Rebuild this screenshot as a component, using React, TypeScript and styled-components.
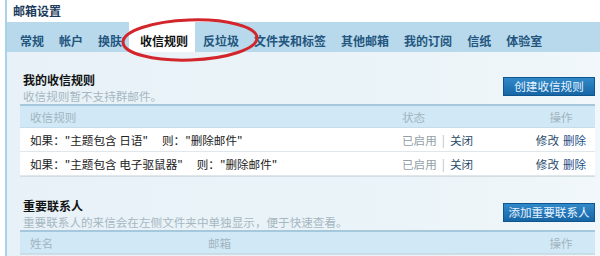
import React from "react";
import styled, { createGlobalStyle } from "styled-components";

const GlobalStyle = createGlobalStyle`
  html, body { margin: 0; padding: 0; background: #ffffff; }
  body {
    font-family: "Noto Sans CJK SC", "Liberation Sans", sans-serif;
    font-size: 12px;
    color: #222;
  }
`;

const Page = styled.div`
  position: relative;
  width: 600px;
  height: 256px;
  overflow: hidden;
  background: #fff;
  padding-left: 5px;
  box-sizing: border-box;
`;

const Frame = styled.div`
  height: 100%;
  border-left: 2px solid #a8d1ea;
  display: flex;
  flex-direction: column;
`;

const Title = styled.div`
  height: 22px;
  padding-left: 6px;
  font-size: 12px;
  font-weight: 700;
  line-height: 22px;
  color: #1d3c5c;
`;

const TabBar = styled.div`
  height: 30px;
  background: #b7d9eb;
  display: flex;
  align-items: stretch;
  padding-left: 5px;
`;

const Tab = styled.div<{ $active?: boolean }>`
  padding: ${(p) => (p.$active ? "4px 7px 0 11px" : "4px 7px 0 8px")};
  background: ${(p) => (p.$active ? "#ffffff" : "transparent")};
  color: ${(p) => (p.$active ? "#111" : "#24557e")};
  font-size: 12px;
  font-weight: 700;
  line-height: 30px;
  height: 26px;
  white-space: nowrap;
`;

const Content = styled.div`
  flex: 1;
  background: linear-gradient(90deg, #e7f1f7 0%, #ebf4f8 70%, #f1f7fa 100%);
  padding: 20px 5px 0 13px;
  display: flex;
  flex-direction: column;
`;

const Section = styled.div<{ $gap?: number }>`
  margin-bottom: ${(p) => p.$gap ?? 0}px;
`;

const SectionHead = styled.div`
  display: flex;
  justify-content: space-between;
  align-items: flex-start;
  padding-left: 3px;
`;

const HeadText = styled.div`
  display: flex;
  flex-direction: column;
`;

const SectionTitle = styled.div`
  font-size: 12px;
  font-weight: 700;
  line-height: 16px;
  color: #111;
`;

const SectionNote = styled.div`
  font-size: 11.6px;
  line-height: 16px;
  color: #a6b7c2;
`;

const Button = styled.div`
  margin-top: 5px;
  width: 92px;
  height: 19px;
  box-sizing: border-box;
  border: 1px solid #0f5690;
  background: linear-gradient(#3189c9, #1766a6);
  color: #e6f3ff;
  font-size: 11.6px;
  line-height: 17px;
  text-align: center;
`;

const Table = styled.div`
  background: #fff;
  box-shadow: 0 1px 0 #d3dde4;
`;

const Row = styled.div<{ $cols: string; $head?: boolean }>`
  display: grid;
  grid-template-columns: ${(p) => p.$cols};
  height: 24px;
  align-items: center;
  box-sizing: border-box;
  background: ${(p) => (p.$head ? "#d1e9f6" : "#ffffff")};
  border-top: ${(p) => (p.$head ? "2px solid #a6c8dd" : "none")};
  border-bottom: 1px solid ${(p) => (p.$head ? "#c5dcea" : "#dfe7ec")};
  color: ${(p) => (p.$head ? "#a2b4bf" : "#222")};
  font-size: 11.6px;
  line-height: 16px;
`;

const Cell = styled.div<{ $center?: boolean }>`
  padding-left: ${(p) => (p.$center ? "0" : "10px")};
  text-align: ${(p) => (p.$center ? "center" : "left")};
  white-space: nowrap;
`;

const Then = styled.span`
  margin-left: 14px;
`;

const Muted = styled.span`
  color: #939fa8;
`;

const Sep = styled.span`
  color: #b6c0c7;
  margin: 0 5px;
`;

const Link = styled.span`
  color: #2a4b6c;
`;

const LinkBlue = styled.span`
  color: #1d4d86;
  margin-left: 4px;
`;

const Annotation = styled.svg`
  position: absolute;
  left: 118px;
  top: 17px;
  pointer-events: none;
`;

const tabs = ["常规", "帐户", "换肤", "收信规则", "反垃圾", "文件夹和标签", "其他邮箱", "我的订阅", "信纸", "体验室"];

const ruleCols = "372px 135px 1fr";
const contactCols = "178px 1fr 68px";

const rules = ["日语", "电子驱鼠器"];

export default function App() {
  return (
    <>
      <GlobalStyle />
      <Page>
        <Frame>
          <Title>邮箱设置</Title>
          <TabBar>
            {tabs.map((t) => (
              <Tab key={t} $active={t === "收信规则"}>
                {t}
              </Tab>
            ))}
          </TabBar>
          <Content>
            <Section $gap={22}>
              <SectionHead>
                <HeadText>
                  <SectionTitle>我的收信规则</SectionTitle>
                  <SectionNote>收信规则暂不支持群邮件。</SectionNote>
                </HeadText>
                <Button>创建收信规则</Button>
              </SectionHead>
              <Table>
                <Row $cols={ruleCols} $head>
                  <Cell>收信规则</Cell>
                  <Cell>状态</Cell>
                  <Cell $center>操作</Cell>
                </Row>
                {rules.map((r) => (
                  <Row key={r} $cols={ruleCols}>
                    <Cell>
                      如果："主题包含 {r}"<Then>则："删除邮件"</Then>
                    </Cell>
                    <Cell>
                      <Muted>已启用</Muted>
                      <Sep>|</Sep>
                      <Link>关闭</Link>
                    </Cell>
                    <Cell $center>
                      <Link>修改</Link>
                      <LinkBlue>删除</LinkBlue>
                    </Cell>
                  </Row>
                ))}
              </Table>
            </Section>
            <Section>
              <SectionHead>
                <HeadText>
                  <SectionTitle>重要联系人</SectionTitle>
                  <SectionNote>重要联系人的来信会在左侧文件夹中单独显示，便于快速查看。</SectionNote>
                </HeadText>
                <Button>添加重要联系人</Button>
              </SectionHead>
              <Table>
                <Row $cols={contactCols} $head>
                  <Cell>姓名</Cell>
                  <Cell>邮箱</Cell>
                  <Cell $center>操作</Cell>
                </Row>
              </Table>
            </Section>
          </Content>
        </Frame>
        <Annotation width="150" height="50" viewBox="0 0 150 50">
          <ellipse
            cx="72"
            cy="23"
            rx="67"
            ry="20"
            fill="none"
            stroke="#d2262c"
            strokeWidth="3"
            transform="rotate(-2 72 23)"
          />
        </Annotation>
      </Page>
    </>
  );
}
